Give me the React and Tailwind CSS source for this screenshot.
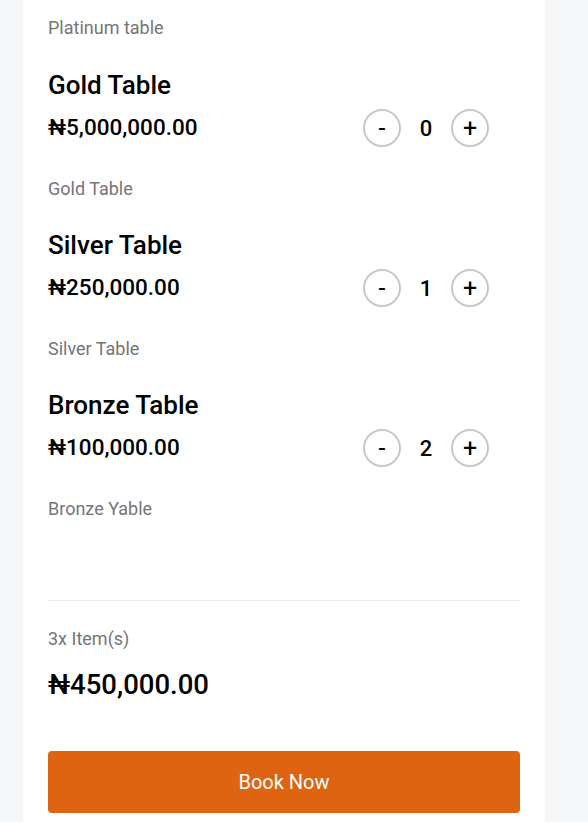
import { useState } from 'react';

const tables = [
  { name: 'Gold Table', price: '₦5,000,000.00', qty: 0, note: 'Gold Table' },
  { name: 'Silver Table', price: '₦250,000.00', qty: 1, note: 'Silver Table' },
  { name: 'Bronze Table', price: '₦100,000.00', qty: 2, note: 'Bronze Yable' },
];

const StepButton = ({ label, onClick }) => (
  <button
    onClick={onClick}
    className="flex h-[38px] w-[38px] items-center justify-center rounded-full border-2 border-[#c8c8c8] text-[25px] leading-none text-black"
  >
    {label}
  </button>
);

const App = () => {
  const [counts, setCounts] = useState(tables.map((t) => t.qty));

  const change = (i, d) => {
    setCounts((c) => c.map((v, j) => (j === i ? Math.max(0, v + d) : v)));
  };

  return (
    <div className="min-h-[822px] bg-[#f5f6f8]" style={{ fontFamily: 'Roboto, "Liberation Sans", sans-serif' }}>
      <div className="ml-[23px] w-[522px] bg-white px-[25px] pb-[9px] pt-[16px]">
        <p className="text-[18px] leading-6 text-[#757575]">Platinum table</p>

        {tables.map((t, i) => (
          <div key={t.name} className={i === 0 ? 'mt-[29px]' : 'mt-[28px]'}>
            <h2 className="text-[26px] font-medium leading-8 text-black">{t.name}</h2>
            <div className="mt-[7px] flex h-10 items-center justify-between pr-[31px]">
              <span className="text-[22.5px] font-medium text-black">{t.price}</span>
              <div className="flex items-center gap-[6px]">
                <StepButton label="-" onClick={() => change(i, -1)} />
                <span className="w-[38px] text-center text-[22px] font-medium">{counts[i]}</span>
                <StepButton label="+" onClick={() => change(i, 1)} />
              </div>
            </div>
            <p className="mt-[29px] text-[18px] leading-6 text-[#757575]">{t.note}</p>
          </div>
        ))}

        <div className="mt-[79px] border-t border-[#eeeeee]" />
        <p className="mt-[26px] text-[18px] leading-6 text-[#757575]">3x Item(s)</p>
        <p className="mt-[16px] text-[27.5px] font-medium leading-9 text-black">₦450,000.00</p>
        <button className="mt-[48px] h-[62px] w-full rounded-[4px] bg-[#df6411] text-[20px] text-white">
          Book Now
        </button>
      </div>
    </div>
  );
};

export default App;
